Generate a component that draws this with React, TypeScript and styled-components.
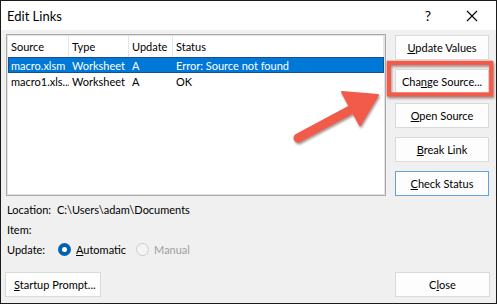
import React from 'react'
import styled, { createGlobalStyle } from 'styled-components'

const GlobalStyle = createGlobalStyle`
  html, body {
    margin: 0;
    padding: 0;
    background: #ffffff;
  }
  body {
    font-family: Lato, 'Noto Sans', sans-serif;
  }
`

interface LinkRow {
  source: string
  type: string
  update: string
  status: string
  selected?: boolean
}

const rows: LinkRow[] = [
  { source: 'macro.xlsm', type: 'Worksheet', update: 'A', status: 'Error: Source not found', selected: true },
  { source: 'macro1.xls...', type: 'Worksheet', update: 'A', status: 'OK' },
]

const Window = styled.div`
  position: relative;
  width: 497px;
  height: 304px;
  box-sizing: border-box;
  border: 1px solid #1b1b1b;
  background: #f0f0f0;
  display: flex;
  flex-direction: column;
  font-size: 11px;
  color: #000;
`

const TitleBar = styled.div`
  height: 29px;
  flex: none;
  background: #ffffff;
  display: flex;
  align-items: center;
  padding: 0 2px 0 6px;
`

const Title = styled.div`
  flex: 1;
  font-size: 13px;
  color: #000;
`

const TitleIcon = styled.div`
  width: 44px;
  display: flex;
  align-items: center;
  justify-content: center;
  font-size: 14px;
`

const Main = styled.div`
  display: flex;
  gap: 9px;
  padding: 4px 6px 0 5px;
`

const LeftCol = styled.div`
  width: 380px;
  display: flex;
  flex-direction: column;
`

const ListBox = styled.div`
  height: 162px;
  box-sizing: border-box;
  background: #fff;
  border: 1px solid #a9a9a9;
  box-shadow: inset 0 0 0 1px #e2e2e2;
  padding: 1px 1px;
`

const Grid = styled.div<{ $selected?: boolean; $header?: boolean }>`
  display: grid;
  grid-template-columns: 61px 60px 44px 1fr;
  height: ${({ $header }) => ($header ? '21px' : '16px')};
  align-items: center;
  background: ${({ $selected }) => ($selected ? '#0078d7' : 'transparent')};
  color: ${({ $selected }) => ($selected ? '#fff' : '#000')};
  outline: ${({ $selected }) => ($selected ? '1px solid #1b4f86' : 'none')};
  outline-offset: -1px;
`

const Cell = styled.div<{ $header?: boolean }>`
  padding-left: 3px;
  height: 100%;
  display: flex;
  align-items: center;
  white-space: nowrap;
  overflow: hidden;
  border-right: ${({ $header }) => ($header ? '1px solid #e5e5e5' : 'none')};
`

const Info = styled.div`
  display: grid;
  grid-template-columns: 50px 1fr;
  grid-auto-rows: 20px;
  align-items: center;
  margin-top: 3px;
  padding-left: 1px;
`

const RadioGroup = styled.div`
  display: flex;
  align-items: center;
  margin-left: 1px;
`

const RadioOption = styled.label<{ $disabled?: boolean }>`
  display: flex;
  align-items: center;
  gap: 5px;
  margin-right: 10px;
  color: ${({ $disabled }) => ($disabled ? '#a0a0a0' : '#000')};
`

const RadioDot = styled.span<{ $checked?: boolean }>`
  width: 13px;
  height: 13px;
  box-sizing: border-box;
  border-radius: 50%;
  background: ${({ $checked }) => ($checked ? '#0063b1' : '#f4f4f4')};
  border: ${({ $checked }) => ($checked ? 'none' : '1px solid #cccccc')};
  display: flex;
  align-items: center;
  justify-content: center;

  &::after {
    content: '';
    width: 5px;
    height: 5px;
    border-radius: 50%;
    background: #fff;
    display: ${({ $checked }) => ($checked ? 'block' : 'none')};
  }
`

const RightCol = styled.div`
  width: 94px;
  display: flex;
  flex-direction: column;
  gap: 9px;
  padding-top: 1px;
`

const Button = styled.div<{ $default?: boolean; $width?: number; $left?: boolean }>`
  height: 25px;
  width: ${({ $width }) => ($width ? `${$width}px` : 'auto')};
  box-sizing: border-box;
  background: #fdfdfd;
  border: 1px solid ${({ $default }) => ($default ? '#62a2e4' : '#dadada')};
  display: flex;
  align-items: center;
  justify-content: ${({ $left }) => ($left ? 'flex-start' : 'center')};
  padding-left: ${({ $left }) => ($left ? '8px' : '0')};
  white-space: nowrap;
`

const Footer = styled.div`
  margin-top: auto;
  display: flex;
  justify-content: space-between;
  padding: 0 6px 6px 4px;
`

const Annotation = styled.svg`
  position: absolute;
  left: -1px;
  top: -1px;
  width: 497px;
  height: 304px;
  pointer-events: none;
  filter: drop-shadow(1px 2px 1px rgba(80, 20, 10, 0.45));
`

const CloseGlyph = () => (
  <svg width="12" height="12" viewBox="0 0 12 12">
    <path d="M1 1 L11 11 M11 1 L1 11" stroke="#000" strokeWidth="1.1" />
  </svg>
)

const App = () => (
  <>
    <GlobalStyle />
    <Window>
      <TitleBar>
        <Title>Edit Links</Title>
        <TitleIcon>?</TitleIcon>
        <TitleIcon>
          <CloseGlyph />
        </TitleIcon>
      </TitleBar>
      <Main>
        <LeftCol>
          <ListBox>
            <Grid $header>
              <Cell $header>Source</Cell>
              <Cell $header>Type</Cell>
              <Cell $header>Update</Cell>
              <Cell $header>Status</Cell>
            </Grid>
            {rows.map((r) => (
              <Grid key={r.source} $selected={r.selected}>
                <Cell>{r.source}</Cell>
                <Cell>{r.type}</Cell>
                <Cell>{r.update}</Cell>
                <Cell>{r.status}</Cell>
              </Grid>
            ))}
          </ListBox>
          <Info>
            <span>Location:</span>
            <span>C:\Users\adam\Documents</span>
            <span>Item:</span>
            <span />
            <span>Update:</span>
            <RadioGroup>
              <RadioOption>
                <RadioDot $checked />
                <span>
                  <u>A</u>utomatic
                </span>
              </RadioOption>
              <RadioOption $disabled>
                <RadioDot />
                <span>Manual</span>
              </RadioOption>
            </RadioGroup>
          </Info>
        </LeftCol>
        <RightCol>
          <Button>
            <span><u>U</u>pdate Values</span>
          </Button>
          <Button>
            <span>Cha<u>n</u>ge Source...</span>
          </Button>
          <Button>
            <span><u>O</u>pen Source</span>
          </Button>
          <Button>
            <span><u>B</u>reak Link</span>
          </Button>
          <Button $default>
            <span><u>C</u>heck Status</span>
          </Button>
        </RightCol>
      </Main>
      <Footer>
        <Button $width={96} $left>
          <span><u>S</u>tartup Prompt...</span>
        </Button>
        <Button $width={95}>
          <span>C<u>l</u>ose</span>
        </Button>
      </Footer>
      <Annotation viewBox="0 0 497 304">
        <rect x="388.8" y="62.8" width="102.4" height="31.6" fill="none" stroke="#f25a4a" strokeWidth="4.2" />
        <line x1="298" y1="138" x2="354" y2="108" stroke="#f25a4a" strokeWidth="9" strokeLinecap="round" />
        <polygon points="378,95 342,92 360,125" fill="#f25a4a" strokeLinejoin="round" stroke="#f25a4a" strokeWidth="2" />
      </Annotation>
    </Window>
  </>
)

export default App
